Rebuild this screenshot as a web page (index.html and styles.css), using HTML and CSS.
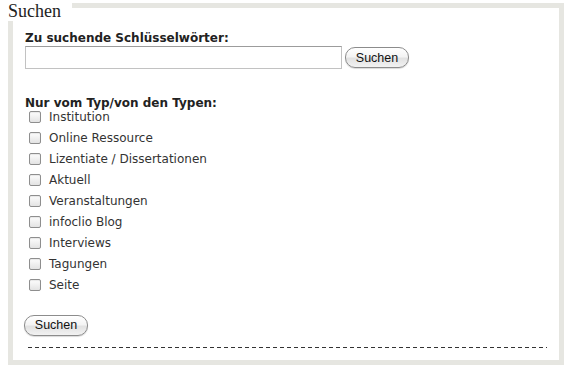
FILE: index.html
```html
<!DOCTYPE html>
<html>
<head>
<meta charset="utf-8">
<link rel="stylesheet" href="styles.css">
</head>
<body>
<div class="box">
  <div class="legend">Suchen</div>
  <form class="form">
    <label class="label" for="q">Zu suchende Schlüsselwörter:</label>
    <div class="search-row">
      <input class="text" id="q" type="text">
      <button class="btn" type="button">Suchen</button>
    </div>
    <div class="label types">Nur vom Typ/von den Typen:</div>
    <ul class="list">
      <li><input class="cb" type="checkbox"><span>Institution</span></li>
      <li><input class="cb" type="checkbox"><span>Online Ressource</span></li>
      <li><input class="cb" type="checkbox"><span>Lizentiate / Dissertationen</span></li>
      <li><input class="cb" type="checkbox"><span>Aktuell</span></li>
      <li><input class="cb" type="checkbox"><span>Veranstaltungen</span></li>
      <li><input class="cb" type="checkbox"><span>infoclio Blog</span></li>
      <li><input class="cb" type="checkbox"><span>Interviews</span></li>
      <li><input class="cb" type="checkbox"><span>Tagungen</span></li>
      <li><input class="cb" type="checkbox"><span>Seite</span></li>
    </ul>
    <button class="btn btn-bottom" type="button">Suchen</button>
    <div class="dash"></div>
  </form>
</div>
</body>
</html>
```
FILE: styles.css
```css
html, body {
  margin: 0;
  padding: 0;
  background: #fff;
}
body {
  padding: 3px 11px 0 8px;
  font-family: "DejaVu Sans", Verdana, sans-serif;
  color: #333;
}
.box {
  position: relative;
  border: 5px solid #e6e6e1;
  height: 352px;
  box-sizing: content-box;
}
.legend {
  position: absolute;
  left: -5px;
  top: -7px;
  padding-right: 11px;
  background: #fff;
  font-family: "Liberation Serif", "Times New Roman", serif;
  font-size: 18px;
  line-height: 20px;
  color: #222;
}
.form {
  margin: 0;
  padding: 23px 0 0 12px;
  display: flex;
  flex-direction: column;
  align-items: flex-start;
}
.label {
  font-weight: bold;
  font-size: 12px;
  line-height: 14px;
  color: #222;
}
.search-row {
  display: flex;
  align-items: center;
  gap: 3px;
  margin-top: 1px;
}
.text {
  width: 317px;
  height: 23px;
  box-sizing: border-box;
  border: 1px solid #c2c2c2;
  border-top-color: #9c9c9c;
  margin: 0;
  padding: 0;
  background: #fff;
}
.btn {
  width: 64px;
  height: 21px;
  box-sizing: border-box;
  border: 1px solid #8c8c8c;
  border-radius: 10px;
  background: linear-gradient(#ffffff 0%, #f4f4f4 45%, #e2e2e2 55%, #f2f2f2 100%);
  box-shadow: 0 1px 1px rgba(0,0,0,0.15);
  font-family: "Liberation Sans", Arial, sans-serif;
  font-size: 12.5px;
  color: #111;
  padding: 0;
  line-height: 18px;
}
.types {
  margin-top: 27px;
}
.list {
  list-style: none;
  margin: -4px 0 0 0;
  padding: 0;
}
.list li {
  display: flex;
  align-items: center;
  height: 21.1px;
  font-size: 12px;
  color: #333;
}
.cb {
  appearance: none;
  -webkit-appearance: none;
  width: 12px;
  height: 12px;
  margin: 0 8px 0 4px;
  box-sizing: border-box;
  border: 1px solid #8e8e8e;
  border-radius: 2px;
  background: linear-gradient(#fdfdfd, #e3e3e3);
  box-shadow: inset 0 1px 1px rgba(0,0,0,0.08);
}
.btn-bottom {
  margin-top: 19px;
  margin-left: -1px;
}
.dash {
  margin-top: 11px;
  margin-left: 3px;
  width: 519px;
  height: 1px;
  background: repeating-linear-gradient(to right, #333 0 4px, transparent 4px 7px);
}
```
